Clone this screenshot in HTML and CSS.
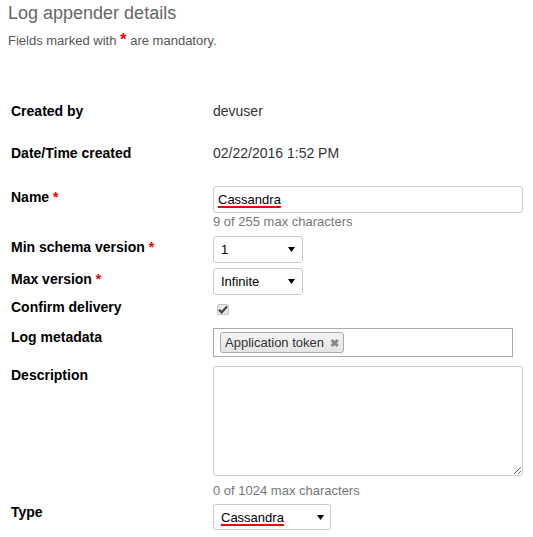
FILE: index.html
```html
<!DOCTYPE html>
<html>
<head>
<meta charset="utf-8">
<link rel="stylesheet" href="styles.css">
</head>
<body>
<div class="page">
  <h1 class="title">Log appender details</h1>
  <p class="subtitle">Fields marked with <span class="req-big">*</span> are mandatory.</p>

  <div class="form">
    <div class="row r-created">
      <div class="label">Created by</div>
      <div class="value text">devuser</div>
    </div>
    <div class="row r-date">
      <div class="label">Date/Time created</div>
      <div class="value text">02/22/2016 1:52 PM</div>
    </div>
    <div class="row r-name">
      <div class="label">Name <span class="req">*</span></div>
      <div class="value">
        <div class="input"><span class="spell">Cassandra</span></div>
        <div class="hint hint-name">9 of 255 max characters</div>
      </div>
    </div>
    <div class="row r-min">
      <div class="label">Min schema version <span class="req">*</span></div>
      <div class="value">
        <div class="select sel-small"><span>1</span><svg class="arrow" width="7" height="5" viewBox="0 0 7 5"><path d="M0 0H7L3.5 5Z" fill="#000"/></svg></div>
      </div>
    </div>
    <div class="row r-max">
      <div class="label">Max version <span class="req">*</span></div>
      <div class="value">
        <div class="select sel-small"><span>Infinite</span><svg class="arrow" width="7" height="5" viewBox="0 0 7 5"><path d="M0 0H7L3.5 5Z" fill="#000"/></svg></div>
      </div>
    </div>
    <div class="row r-confirm">
      <div class="label">Confirm delivery</div>
      <div class="value">
        <span class="checkbox"><svg width="10" height="9" viewBox="0 0 10 9"><path d="M1 4.8L3.6 7.4L9 1.4" fill="none" stroke="#444" stroke-width="2.2"/></svg></span>
      </div>
    </div>
    <div class="row r-meta">
      <div class="label">Log metadata</div>
      <div class="value">
        <div class="tags"><span class="tag">Application token <span class="tag-x">&#x2716;</span></span></div>
      </div>
    </div>
    <div class="row r-desc">
      <div class="label">Description</div>
      <div class="value">
        <textarea class="textarea"></textarea>
        <div class="hint">0 of 1024 max characters</div>
      </div>
    </div>
    <div class="row r-type">
      <div class="label">Type</div>
      <div class="value">
        <div class="select sel-type"><span class="spell">Cassandra</span><svg class="arrow" width="7" height="5" viewBox="0 0 7 5"><path d="M0 0H7L3.5 5Z" fill="#000"/></svg></div>
      </div>
    </div>
  </div>
</div>
</body>
</html>
```

FILE: styles.css
```css
html, body {
  margin: 0;
  padding: 0;
  background: #fff;
}
body {
  font-family: "Liberation Sans", Arial, sans-serif;
  color: #333;
}
.page {
  padding: 2px 8px 0 8px;
}
.title {
  margin: 0;
  font-size: 18px;
  line-height: 22px;
  font-weight: normal;
  color: #666;
}
.subtitle {
  margin: 8px 0 0 0;
  font-size: 13px;
  line-height: 18px;
  color: #555;
}
.req-big {
  color: #e00;
  font-size: 17px;
  font-weight: bold;
  line-height: 0;
}
.form {
  padding-left: 3px;
  margin-top: 50px;
}
.row {
  display: grid;
  grid-template-columns: 202px 1fr;
  align-items: start;
}
.label {
  font-size: 14px;
  font-weight: bold;
  line-height: 22px;
  color: #000;
}
.req {
  color: #e00;
}
.text {
  font-size: 14px;
  line-height: 22px;
  color: #333;
}
.r-date { margin-top: 20px; }
.r-name { margin-top: 22px; }
.r-min { margin-top: 6px; }
.r-max { margin-top: 5px; }
.r-confirm { margin-top: 1px; }
.r-meta { margin-top: 8px; }
.r-meta .value { margin-top: 2px; }
.r-desc { margin-top: 7px; }
.r-desc .value { margin-top: 2px; }
.r-type { margin-top: 2px; }
.r-type .value { margin-top: 3px; }

.input {
  box-sizing: border-box;
  width: 310px;
  height: 27px;
  border: 1px solid #ccc;
  border-radius: 3px;
  padding: 0 4px;
  display: flex;
  align-items: center;
  font-size: 13px;
  color: #000;
}
.spell {
  text-decoration: underline;
  text-decoration-color: #e00;
  text-decoration-thickness: 2px;
  text-underline-offset: 2px;
}
.hint {
  font-size: 13px;
  line-height: 16px;
  color: #777;
}
.hint-name {
  margin-top: 1px;
}
.select {
  box-sizing: border-box;
  height: 27px;
  border: 1px solid #ccc;
  border-radius: 3px;
  padding: 0 7px 0 7px;
  display: flex;
  align-items: center;
  justify-content: space-between;
  font-size: 13px;
  color: #000;
  background: #fff;
}
.sel-small { width: 90px; }
.sel-type { width: 118px; height: 26px; padding-right: 6px; }
.arrow { display: block; }
.checkbox {
  box-sizing: border-box;
  display: flex;
  align-items: center;
  justify-content: center;
  width: 12px;
  height: 11px;
  margin: 8px 0 0 4px;
  background: #e8e8e8;
  border: 1px solid #c4c4c4;
  border-radius: 2px;
}
.tags {
  box-sizing: border-box;
  width: 300px;
  height: 29px;
  border: 1px solid #aaa;
  padding: 3px 6px;
  display: flex;
  align-items: flex-start;
}
.tag {
  box-sizing: border-box;
  height: 21px;
  width: 124px;
  border: 1px solid #aaa;
  border-radius: 3px;
  background: linear-gradient(#f4f4f4, #e4e4e4);
  font-size: 13px;
  line-height: 19px;
  color: #333;
  padding: 0 4px;
  white-space: nowrap;
}
.tag-x {
  color: #888;
  font-size: 11px;
  font-weight: bold;
  margin-left: 2px;
}
.textarea {
  display: block;
  box-sizing: border-box;
  width: 310px;
  height: 110px;
  margin: 0 0 7px 0;
  border: 1px solid #ccc;
  border-radius: 3px;
  resize: both;
  font-family: "Liberation Sans", Arial, sans-serif;
}
```
